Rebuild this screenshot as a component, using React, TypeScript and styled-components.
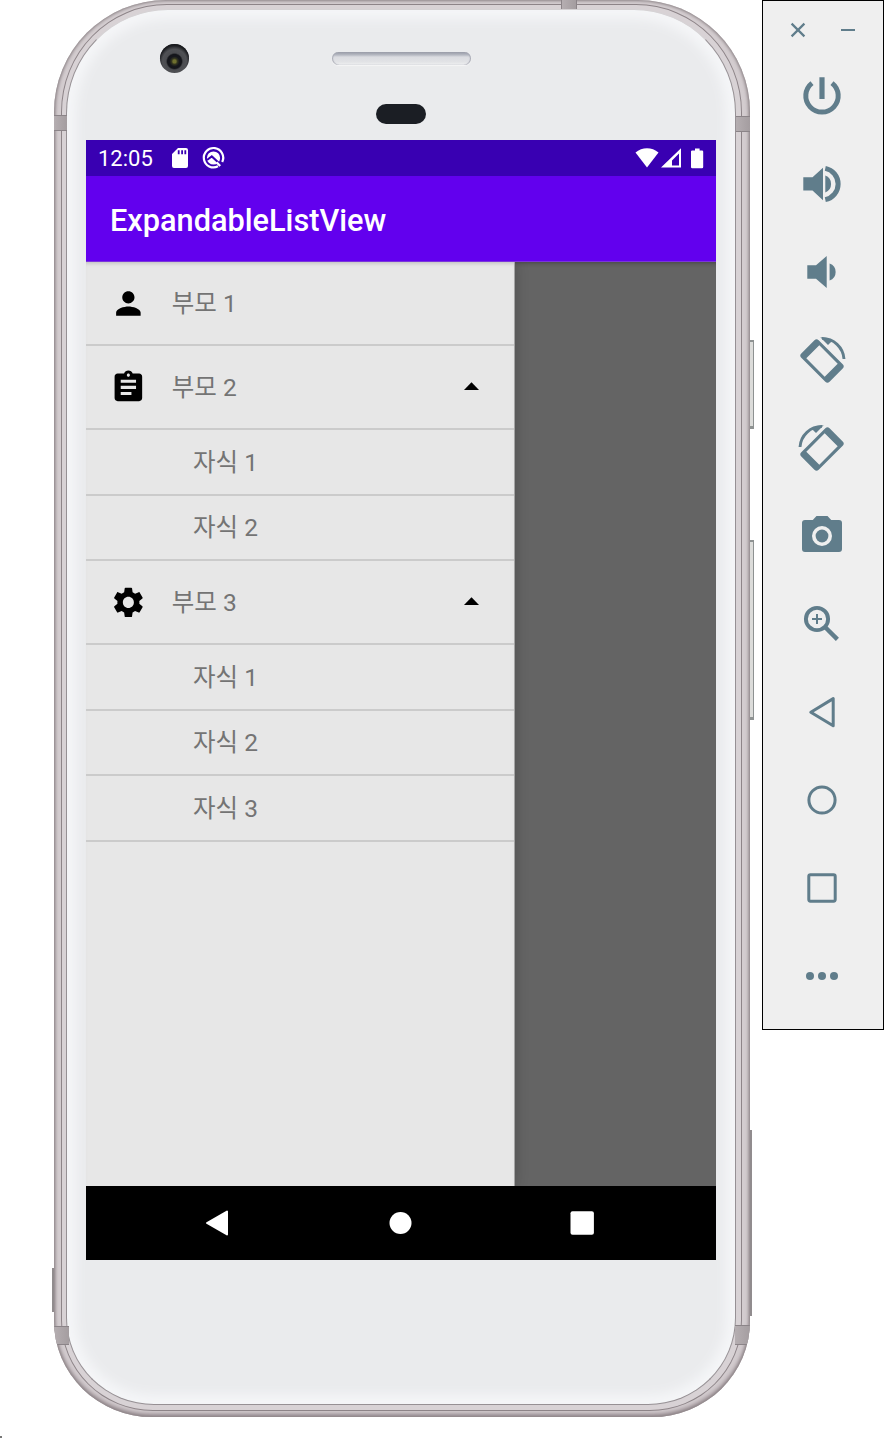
import React from "react";
import styled, { createGlobalStyle } from "styled-components";

const GlobalStyle = createGlobalStyle`
  html, body { margin: 0; padding: 0; background: #fff; }
  body { font-family: Roboto, "Noto Sans CJK KR", sans-serif; }
  * { box-sizing: border-box; }
  svg { display: block; flex: none; overflow: visible; }
`;

const Page = styled.div`
  position: relative;
  display: flex;
  align-items: flex-start;
  width: 884px;
  height: 1438px;
  overflow: hidden;
  background: #fff;
`;

const CornerMark = styled.div`
  position: absolute;
  left: 0;
  bottom: 0;
  width: 2px;
  height: 2px;
  background: #777;
`;

/* ---------- device ---------- */

const Device = styled.div`
  position: relative;
  flex: none;
  width: 696px;
  height: 1417px;
  margin-left: 54px;
`;

const Shell = styled.div`
  position: relative;
  height: 1417px;
  overflow: hidden;
  border-radius: 112px 112px 98px 98px / 112px 112px 96px 96px;
  background: #d3cccf;
  box-shadow: inset 0 0 3px 1px #8d8588, inset 0 -3px 5px #978b90;
  padding: 4px 8px 6px 7px;
`;

const Rim = styled.div`
  height: 1407px;
  border: 1px solid #8d8488;
  border-radius: 106px 106px 92px 92px / 108px 108px 91px 91px;
  background: #d8d2d5;
  padding: 4px 5px 5px 4px;
`;

const Face = styled.div`
  display: flex;
  flex-direction: column;
  height: 1396px;
  border: 1px solid #969094;
  border-top-color: #d5d2d4;
  border-radius: 102px 102px 88px 88px / 104px 104px 87px 87px;
  background: #eaebed;
  box-shadow: inset 0 0 12px 9px #f5f6f8;
  padding: 0 17px 0 19px;
`;

const Band = styled.div<{ $x: number; $y: number; $w: number; $h: number }>`
  position: absolute;
  left: ${(p) => p.$x}px;
  top: ${(p) => p.$y}px;
  width: ${(p) => p.$w}px;
  height: ${(p) => p.$h}px;
  border: solid #8b8488;
  border-width: ${(p) => (p.$y > 50 ? "1px 0" : "0 1px")};
  background: linear-gradient(90deg, #b5aeb1, #a49da0);
`;

const SideKey = styled.div<{ $x: number; $y: number; $w: number; $h: number; $flat?: boolean }>`
  position: absolute;
  left: ${(p) => p.$x}px;
  top: ${(p) => p.$y}px;
  width: ${(p) => p.$w}px;
  height: ${(p) => p.$h}px;
  background: ${(p) => (p.$flat ? "#918c8e" : "#dcdcda")};
  border: solid #8e9292;
  border-width: ${(p) => (p.$flat ? "0" : "2px 1px 3px 0")};
`;

const Forehead = styled.div`
  position: relative;
  height: 130px;
  flex: none;
`;

const Camera = styled.div`
  position: absolute;
  left: 74px;
  top: 34px;
  width: 29px;
  height: 29px;
  border-radius: 50%;
  background: radial-gradient(circle at 50% 60%, #6f702f 0 1.5px, #33351f 3px, #16171d 5px, #14151a 7px, #4b4c50 8.5px, #505155 12px, #303135 15px);
  box-shadow: inset 0 2px 2px #17181c;
`;

const Speaker = styled.div`
  position: absolute;
  left: 246px;
  top: 42px;
  width: 139px;
  height: 13px;
  border-radius: 7px;
  background: linear-gradient(#9699a5, #b7bac3 3px, #dbdce1 5px, #e2e3e6 10px, #f0f1f2);
  box-shadow: 0 1px 1px #f5f5f6, inset 1px 0 1px #a8aab4, inset -1px 0 1px #a8aab4;
`;

const Sensor = styled.div`
  position: absolute;
  left: 290px;
  top: 94px;
  width: 50px;
  height: 20px;
  border-radius: 10px;
  background: #1b1e24;
`;

/* ---------- screen ---------- */

const Screen = styled.div`
  display: flex;
  flex-direction: column;
  flex: none;
  width: 630px;
  height: 1120px;
`;

const StatusBar = styled.div`
  display: flex;
  align-items: center;
  height: 36px;
  padding: 0 12px;
  background: #3900b2;
  color: #fff;
`;

const Clock = styled.span`
  width: 74px;
  padding-top: 2px;
  font-size: 22px;
  line-height: 34px;
`;

const StatusGroup = styled.div<{ $gap: number; $right?: boolean }>`
  display: flex;
  align-items: center;
  gap: ${(p) => p.$gap}px;
  margin-left: ${(p) => (p.$right ? "auto" : "0")};
`;

const AppBar = styled.header`
  display: flex;
  align-items: center;
  height: 86px;
  padding: 4px 24px 0;
  background: #6200ee;
  border-bottom: 1px solid #7a35dc;
  color: #fff;
  font-size: 30.7px;
  font-weight: 500;
`;

const Content = styled.div`
  display: flex;
  height: 924px;
  overflow: hidden;
  background: #646464;
  box-shadow: inset 0 5px 4px -4px #444;
`;

const Drawer = styled.nav`
  width: 428px;
  height: 924px;
  background: #e7e7e7;
  box-shadow: 1px 0 0 #a5a5a5, 2px 0 12px rgba(0, 0, 0, 0.18), inset 0 4px 4px -3px #b9b9b9;
`;

const Row = styled.div<{ $child?: boolean }>`
  display: flex;
  align-items: center;
  height: ${(p) => (p.$child ? "65.5px" : "84px")};
  padding: 0 35px 0 ${(p) => (p.$child ? "107px" : "24px")};
  border-bottom: 2px solid #cbcbcb;
`;

const Label = styled.span<{ $child?: boolean }>`
  flex: 1;
  margin-left: ${(p) => (p.$child ? "0" : "25px")};
  padding-top: 2px;
  color: #747474;
  font-size: 24.5px;
  line-height: 30px;
`;

const NavBar = styled.div`
  position: relative;
  display: flex;
  align-items: center;
  justify-content: space-between;
  height: 74px;
  padding: 0 121px 1px 119px;
  background: #000;
`;

/* ---------- emulator toolbar ---------- */

const Toolbar = styled.aside`
  flex: none;
  width: 122px;
  height: 1030px;
  margin-left: 12px;
  border: 1px solid #000;
  background: #efefef;
  color: #607d8b;
`;

const WindowButtons = styled.div`
  display: flex;
  justify-content: space-between;
  height: 51px;
  padding: 21px 27px 0 27px;
`;

const Tool = styled.div`
  display: flex;
  align-items: center;
  justify-content: center;
  height: 88px;
  padding-right: 2px;
`;

const MATERIAL = {
  person: "M12 12c2.21 0 4-1.79 4-4s-1.79-4-4-4-4 1.79-4 4 1.79 4 4 4zm0 2c-2.67 0-8 1.34-8 4v2h16v-2c0-2.66-5.33-4-8-4z",
  assignment:
    "M19 3h-4.18C14.4 1.84 13.3 1 12 1c-1.3 0-2.4.84-2.82 2H5c-1.1 0-2 .9-2 2v14c0 1.1.9 2 2 2h14c1.1 0 2-.9 2-2V5c0-1.1-.9-2-2-2zm-7 0c.55 0 1 .45 1 1s-.45 1-1 1-1-.45-1-1 .45-1 1-1zm2 14H7v-2h7v2zm3-4H7v-2h10v2zm0-4H7V7h10v2z",
  settings:
    "M19.14 12.94c.04-.3.06-.61.06-.94 0-.32-.02-.64-.07-.94l2.03-1.58c.18-.14.23-.41.12-.61l-1.92-3.32c-.12-.22-.37-.29-.59-.22l-2.39.96c-.5-.38-1.03-.7-1.62-.94l-.36-2.54c-.04-.24-.24-.41-.48-.41h-3.84c-.24 0-.43.17-.47.41l-.36 2.54c-.59.24-1.13.57-1.62.94l-2.39-.96c-.22-.08-.47 0-.59.22L2.74 8.87c-.12.21-.08.47.12.61l2.03 1.58c-.05.3-.09.63-.09.94s.02.64.07.94l-2.03 1.58c-.18.14-.23.41-.12.61l1.92 3.32c.12.22.37.29.59.22l2.39-.96c.5.38 1.03.7 1.62.94l.36 2.54c.05.24.24.41.48.41h3.84c.24 0 .44-.17.47-.41l.36-2.54c.59-.24 1.13-.56 1.62-.94l2.39.96c.22.08.47 0 .59-.22l1.92-3.32c.12-.22.07-.47-.12-.61l-2.01-1.58zM12 15.6c-1.98 0-3.6-1.62-3.6-3.6s1.62-3.6 3.6-3.6 3.6 1.62 3.6 3.6-1.62 3.6-3.6 3.6z",
};

const MenuIcon = ({ name }: { name: keyof typeof MATERIAL }) => (
  <svg width="36.75" height="36.75" viewBox="0 0 24 24">
    <path d={MATERIAL[name]} />
  </svg>
);

const CaretBox = styled.span`
  padding-bottom: 2px;
`;

const Caret = () => (
  <CaretBox>
    <svg width="15" height="8" viewBox="0 0 15 8">
      <path d="M0 8 7.5.2 15 8z" />
    </svg>
  </CaretBox>
);

const ToolSvg = ({ children }: { children: React.ReactNode }) => (
  <svg width="48" height="48" viewBox="0 0 48 48" fill="currentColor">
    {children}
  </svg>
);

const RotateShape = () => (
  <>
    <path
      fillRule="evenodd"
      transform="translate(24 25) rotate(45)"
      d="M-17-12.3H17a3 3 0 0 1 3 3V9.3a3 3 0 0 1-3 3H-17a3 3 0 0 1-3-3V-9.3a3 3 0 0 1 3-3zM-13-9.2V9.2H13V-9.2z"
    />
    <path d="M24 2.4A22 22 0 0 1 46 23" fill="none" stroke="currentColor" strokeWidth="2.9" />
    <path d="M22.3 1.3 30 9l3.6-3.6L29 1.9z" />
  </>
);

const TOOLS: React.ReactNode[] = [
  <>
    <path d="M14 11.1A16.2 16.2 0 1 0 34 11.1" fill="none" stroke="currentColor" strokeWidth="5" />
    <path d="M21.4 5.3h5.2V27h-5.2z" />
  </>,
  <>
    <path d="M5.3 17.2h9.2L25 7.7v32.6l-10.5-9.7H5.3zM27.3 15.6a9 9 0 0 1 0 16.8z" />
    <path d="M27.3 8.4a15.9 15.9 0 0 1 0 31.2" fill="none" stroke="currentColor" strokeWidth="5" />
  </>,
  <path d="M9.3 17.3H18L28.7 8v32L18 30.7H9.3zM31.6 15.5a9 9 0 0 1 0 17z" />,
  <RotateShape />,
  <g transform="matrix(-1 0 0 1 48 0)">
    <RotateShape />
  </g>,
  <>
    <path
      fillRule="evenodd"
      d="M18.5 4h11L33.2 8H41a3 3 0 0 1 3 3v26a3 3 0 0 1-3 3H7a3 3 0 0 1-3-3V11a3 3 0 0 1 3-3h7.8zM24 14a10 10 0 1 0 0 20 10 10 0 0 0 0-20z"
    />
    <circle cx="24" cy="24" r="6.4" />
  </>,
  <>
    <circle cx="19" cy="19" r="11.1" fill="none" stroke="currentColor" strokeWidth="3.9" />
    <path d="M14 19h10M19 14v10" stroke="currentColor" strokeWidth="2" />
    <path d="m27.5 27.5 11.9 11.9" stroke="currentColor" strokeWidth="4.4" />
  </>,
  <path d="M12.8 24.2 35.2 10.6v27.2z" fill="none" stroke="currentColor" strokeWidth="3" strokeLinejoin="round" />,
  <circle cx="24" cy="24" r="13.1" fill="none" stroke="currentColor" strokeWidth="3" />,
  <rect x="10.8" y="10.8" width="26.4" height="26.4" rx="1.6" fill="none" stroke="currentColor" strokeWidth="3" />,
  <>
    <circle cx="12" cy="24" r="4" />
    <circle cx="24" cy="24" r="4" />
    <circle cx="36" cy="24" r="4" />
  </>,
];

type Group = { title: string; icon: keyof typeof MATERIAL; children: string[] };

const GROUPS: Group[] = [
  { title: "부모 1", icon: "person", children: [] },
  { title: "부모 2", icon: "assignment", children: ["자식 1", "자식 2"] },
  { title: "부모 3", icon: "settings", children: ["자식 1", "자식 2", "자식 3"] },
];

export default function App() {
  return (
    <Page>
      <GlobalStyle />
      <Device>
        <SideKey $x={695} $y={340} $w={5} $h={89} />
        <SideKey $x={695} $y={540} $w={5} $h={180} />
        <SideKey $x={-2} $y={1268} $w={3} $h={44} $flat />
        <SideKey $x={695} $y={1130} $w={3} $h={186} $flat />
        <Shell>
          <Rim>
            <Face>
              <Forehead>
                <Camera />
                <Speaker />
                <Sensor />
              </Forehead>
              <Screen>
                <StatusBar>
                  <Clock>12:05</Clock>
                  <StatusGroup $gap={14}>
                    <svg width="16" height="20" viewBox="0 0 16 20">
                      <path
                        fill="#fff"
                        fillRule="evenodd"
                        d="M6 0h8a2 2 0 0 1 2 2v16a2 2 0 0 1-2 2H2a2 2 0 0 1-2-2V6zM5.8 2.2v4h1.8v-4zM9.2 2.2v4H11v-4zM12.4 2.2v4h1.8v-4z"
                      />
                    </svg>
                    <svg width="23" height="22" viewBox="0 0 23 22">
                      <path d="M16 19.3A9.7 9.7 0 1 1 20.2 15" fill="none" stroke="#fff" strokeWidth="2.2" />
                      <circle cx="11.5" cy="11" r="6.6" fill="#fff" />
                      <path d="M5 13 9.8 9.4 18 17" fill="none" stroke="#3900b2" strokeWidth="2" />
                      <path d="M14.6 15.4 18.2 19" fill="none" stroke="#fff" strokeWidth="2.2" />
                    </svg>
                  </StatusGroup>
                  <StatusGroup $gap={0} $right>
                    <svg width="69" height="21" viewBox="0 0 69 21" fill="#fff">
                      <path d="M.5 4.6C7-1.3 17-1.3 23.5 4.6L12 19.5z" />
                      <path fillRule="evenodd" d="M46 .3V19.5H26zM44 5.6 37 12.6v5h7z" />
                      <path d="M60 .4h4.6v2H67a1.2 1.2 0 0 1 1.2 1.2V19a1.2 1.2 0 0 1-1.2 1.2h-9.8A1.2 1.2 0 0 1 56 19V3.6a1.2 1.2 0 0 1 1.2-1.2H60z" />
                    </svg>
                  </StatusGroup>
                </StatusBar>
                <AppBar>ExpandableListView</AppBar>
                <Content>
                  <Drawer>
                    {GROUPS.map((group) => (
                      <React.Fragment key={group.title}>
                        <Row>
                          <MenuIcon name={group.icon} />
                          <Label>{group.title}</Label>
                          {group.children.length > 0 && <Caret />}
                        </Row>
                        {group.children.map((child) => (
                          <Row key={child} $child>
                            <Label $child>{child}</Label>
                          </Row>
                        ))}
                      </React.Fragment>
                    ))}
                  </Drawer>
                </Content>
                <NavBar>
                  <svg width="24" height="26" viewBox="0 0 24 26">
                    <path d="M2 13 22 1.5v23z" fill="#fff" stroke="#fff" strokeWidth="2" strokeLinejoin="round" />
                  </svg>
                  <svg width="24" height="24" viewBox="0 0 24 24">
                    <circle cx="12.5" cy="12" r="11" fill="#fff" />
                  </svg>
                  <svg width="25" height="24" viewBox="0 0 25 24">
                    <rect x="0.5" y="0.3" width="23.4" height="23.4" rx="2" fill="#fff" />
                  </svg>
                </NavBar>
              </Screen>
            </Face>
          </Rim>
          <Band $x={0} $y={115} $w={13} $h={16} />
          <Band $x={682} $y={116} $w={14} $h={16} />
          <Band $x={507} $y={0} $w={16} $h={9} />
          <Band $x={0} $y={1326} $w={15} $h={19} />
          <Band $x={681} $y={1325} $w={15} $h={20} />
        </Shell>
      </Device>
      <Toolbar>
        <WindowButtons>
          <svg width="16" height="16" viewBox="0 0 16 16">
            <path d="m1.6 1.6 12.8 12.8m0-12.8L1.6 14.4" stroke="currentColor" strokeWidth="2.2" />
          </svg>
          <svg width="16" height="16" viewBox="0 0 16 16">
            <path d="M1 8h14" stroke="currentColor" strokeWidth="2" />
          </svg>
        </WindowButtons>
        {TOOLS.map((shape, i) => (
          <Tool key={i}>
            <ToolSvg>{shape}</ToolSvg>
          </Tool>
        ))}
      </Toolbar>
      <CornerMark />
    </Page>
  );
}
